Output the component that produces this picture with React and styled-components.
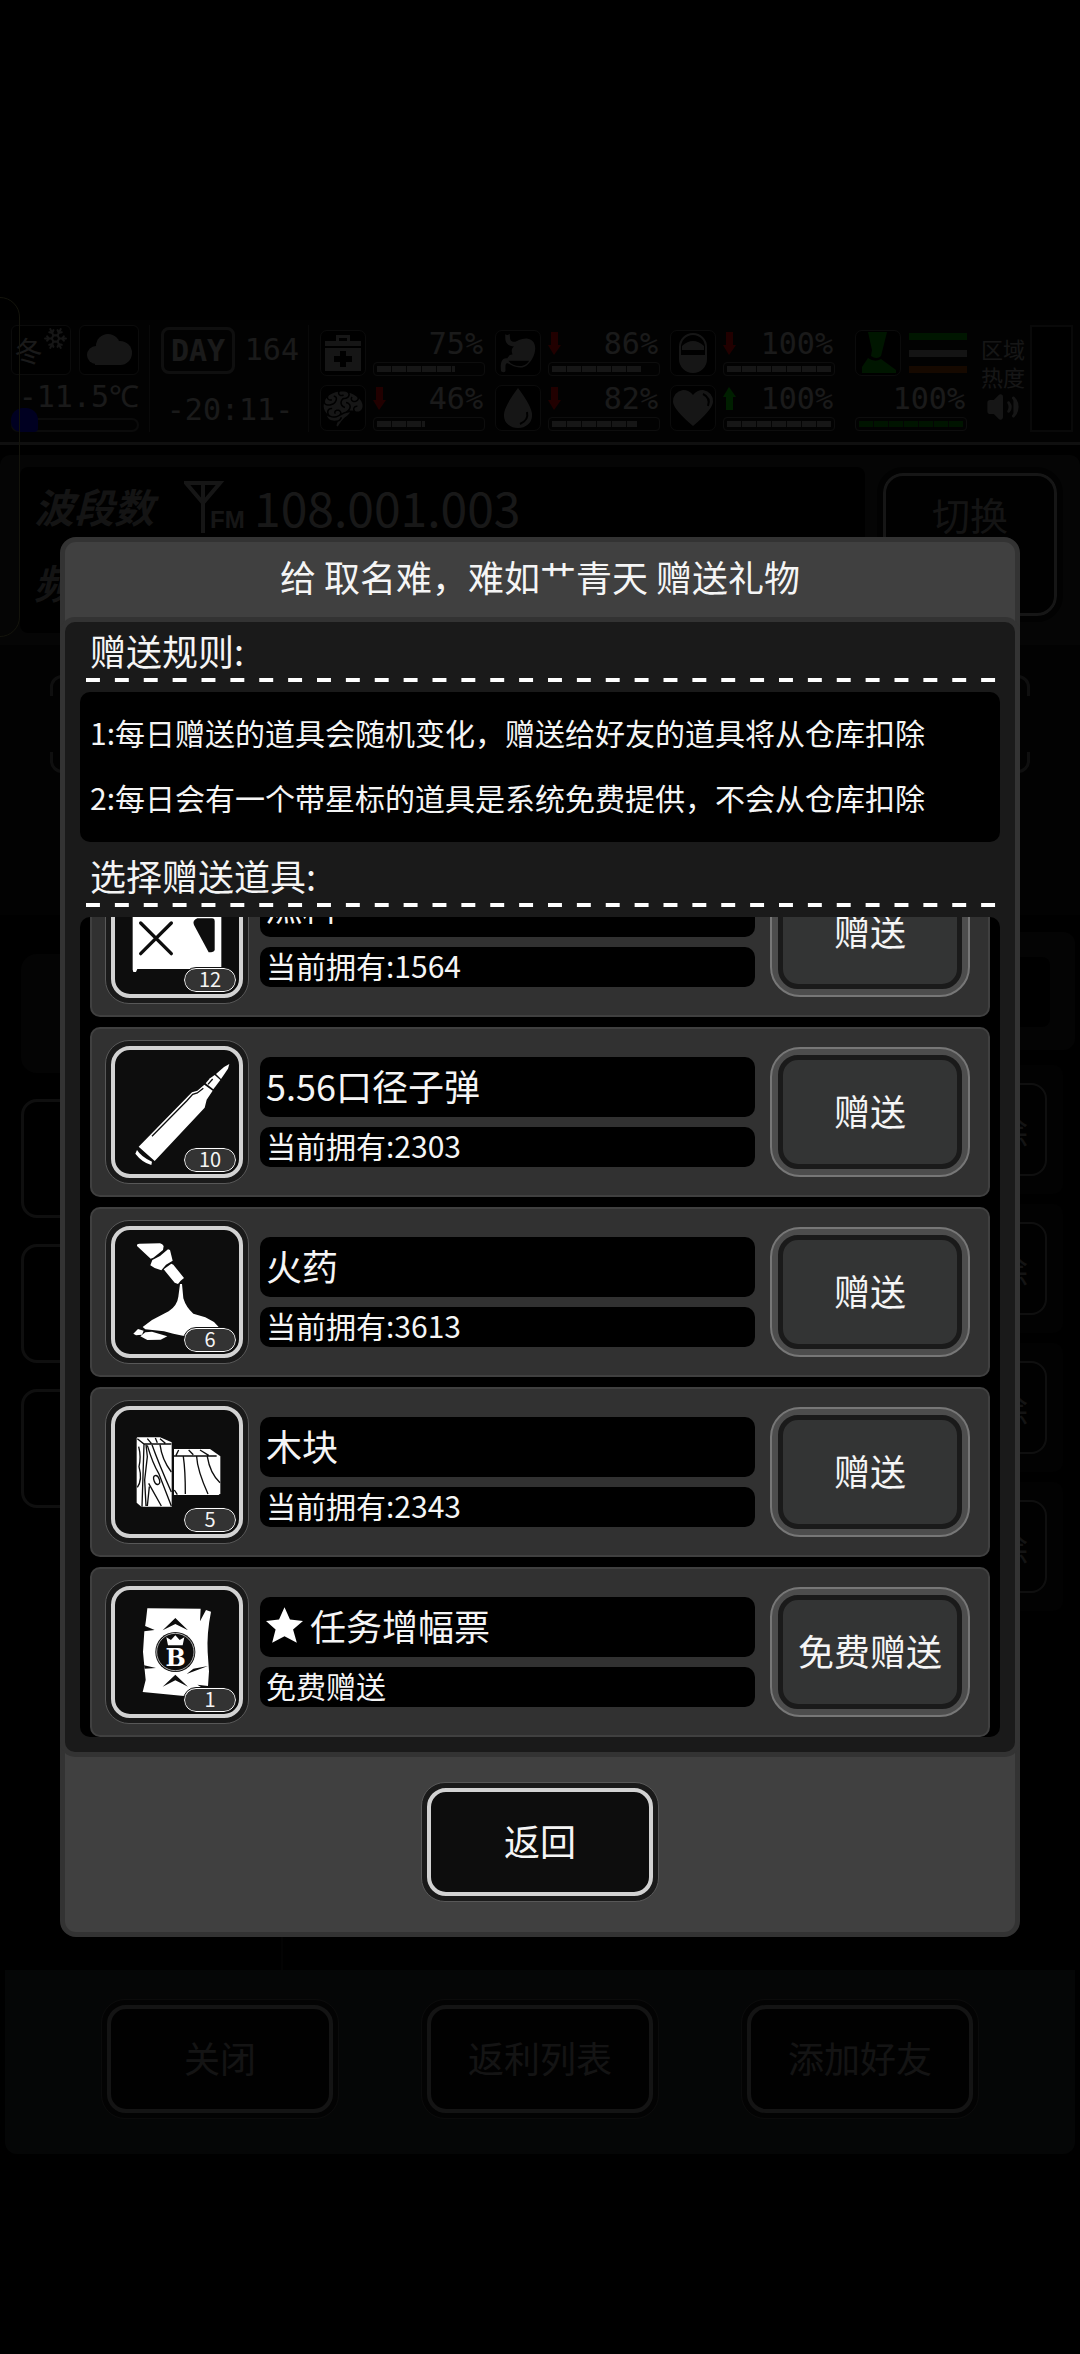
import styled, { createGlobalStyle, css } from "styled-components"
import { GiBrain, GiStomach } from "react-icons/gi"
import { Snowflake, Volume2 } from "lucide-react"

const GlobalStyle = createGlobalStyle`
    * {
        box-sizing: border-box;
    }
    body {
        margin: 0;
        background-color: #000;
        color: #f5f5f5;
        font-family: "Noto Sans CJK SC", sans-serif;
    }
    h1, h2, p, ul, ol {
        margin: 0;
        padding: 0;
        font-weight: 400;
        list-style: none;
    }
    button {
        font-family: inherit;
        color: inherit;
        cursor: pointer;
    }
`

/* double frame shared by the item tiles and the black buttons */
const darkFrame = css`
    padding: 5px;
    background-color: #1a1a1a;
    border: 1px solid #585858;
    border-radius: 24px;
`

const darkInner = css`
    display: flex;
    align-items: center;
    justify-content: center;
    width: 100%;
    height: 100%;
    background-color: #0d0d0d;
    border: 4px solid #d2d2d2;
    border-radius: 19px;
`

const Page = styled.div`
    min-height: 100vh;
    padding-top: 320px;
    overflow: hidden;
`

const Stage = styled.div`
    position: relative;
`

/* ---------- status bar ---------- */

const Hud = styled.header`
    display: flex;
    height: 125px;
    padding: 5px 7px 10px 11px;
    background-color: #141414;
    border-bottom: 3px solid #777;
    font-family: "DejaVu Sans Mono", monospace;
    font-size: 30px;
    line-height: 24px;
    color: #c4c4c4;
`

const HudGroup = styled.div`
    display: flex;
    flex-direction: column;
    flex-shrink: 0;
    justify-content: space-between;
    width: ${props => props.$width}px;
    margin-right: ${props => props.$gap || 0}px;
    padding: ${props => props.$padding || 0};
`

const HudLine = styled.div`
    display: flex;
    align-items: center;
    justify-content: ${props => props.$justify || "space-between"};
`

const Divider = styled.div`
    width: 1px;
    margin-right: 11px;
    background-color: #444;
`

const WeatherBox = styled.div`
    display: flex;
    align-items: center;
    justify-content: center;
    width: 60px;
    height: 50px;
    background-color: #000;
    border: 1px solid #555;
    border-radius: 6px;
    font-family: "Noto Sans CJK SC", sans-serif;
    font-size: 28px;

    svg {
        align-self: ${props => (props.$season ? "flex-start" : "center")};
    }
`

const Thermometer = styled.div`
    position: relative;
    height: 14px;
    border: 2px solid #555;
    border-radius: 7px;

    &::before {
        content: "";
        position: absolute;
        left: -2px;
        bottom: -2px;
        width: 27px;
        height: 24px;
        background-color: #00f;
        border-radius: 12px 12px 4px 10px;
    }
`

const DayBox = styled.div`
    width: 74px;
    height: 47px;
    margin-top: 2px;
    border: 3px solid #777;
    border-radius: 8px;
    font-weight: bold;
    line-height: 42px;
    text-align: center;
`

const IconBox = styled.div`
    display: flex;
    align-items: center;
    justify-content: center;
    width: 46px;
    height: 46px;
    background-color: #000;
    border: 1px solid #555;
    border-radius: 7px;
    color: ${props => props.$color || "#aaa"};
`

const Gauge = styled.div`
    display: flex;
    gap: 7px;
`

const GaugeBody = styled.div`
    display: flex;
    flex-direction: column;
    justify-content: space-between;
    width: 112px;
    height: 46px;

    span {
        padding: 2px 2px 0 0;
    }
`

const Bar = styled.div`
    height: 14px;
    padding: 3px;
    border: 1px solid #666;
    border-radius: 4px;
`

const BarFill = styled.div`
    height: 100%;
    background: repeating-linear-gradient(90deg, ${props => props.$color || "#aaa"} 0 14px, #222 14px 15px);
`

const Stripe = styled.div`
    width: 58px;
    height: 7px;
    background-color: ${props => props.$color};
`

const StripeStack = styled.div`
    display: flex;
    flex-direction: column;
    justify-content: space-between;
    height: 40px;
`

const HeatLabel = styled.div`
    display: flex;
    flex-direction: column;
    align-items: center;
    width: 44px;
    margin-right: 5px;
    padding-top: 9px;
    font-family: "Noto Sans CJK SC", sans-serif;
    font-size: 22px;
    line-height: 28px;
    color: #aaa;
`

const HeatBox = styled.div`
    flex: 1;
    background-color: #000;
    border: 2px solid #444;
`

/* ---------- page behind the dialog ---------- */

const EdgeHandle = styled.div`
    position: absolute;
    top: -23px;
    left: -2px;
    width: 22px;
    height: 340px;
    border: 1px solid #14140c;
    border-radius: 0 20px 20px 0;
`

const Radio = styled.section`
    display: flex;
    gap: 18px;
    height: 190px;
    margin-top: 10px;
    padding: 12px 23px 12px 20px;
    background-color: #282c2a;
    border-radius: 10px 10px 0 0;
`

const Frequency = styled.div`
    display: flex;
    flex-direction: column;
    gap: 14px;
    flex: 1;
    padding: 8px 14px;
    background-color: #000;
    border-radius: 8px;
`

const FrequencyRow = styled.div`
    display: flex;
    align-items: center;
    gap: 30px;
    height: 62px;
    color: #b8b8b8;

    strong {
        font-size: 40px;
        font-style: italic;
        line-height: 48px;
        color: #999;
    }
`

const FrequencyValue = styled.div`
    display: flex;
    align-items: center;
    gap: 8px;
    font-size: 48px;
    line-height: 56px;
`

const SwitchButton = styled.button`
    align-self: flex-start;
    width: 174px;
    height: 143px;
    margin-top: 6px;
    padding: 0 0 62px;
    background-color: #080808;
    border: 3px solid #aaa;
    border-radius: 20px;
    outline: 6px solid #111;
    font-size: 38px;
    line-height: 40px;
    color: #999;
`

const Signal = styled.section`
    height: 270px;
    padding: 30px 50px 0;
    background-color: #111;
`

/* only the corners of the frame show */
const SignalFrame = styled.div`
    position: relative;
    height: 98px;
    border: 3px solid #777;
    border-radius: 12px;

    &::after {
        content: "";
        position: absolute;
        inset: 18px -3px;
        background-color: #111;
    }
`

const Friends = styled.section`
    display: grid;
    grid-template-columns: 278px 1fr;
    height: 1055px;
    margin: 0 5px;
    background-color: #060606;
`

const Tabs = styled.div`
    display: flex;
    flex-direction: column;
    gap: 26px;
    padding: 39px 16px;
    border-right: 2px solid #1c1c1c;
`

const Tab = styled.button`
    height: 119px;
    background-color: ${props => (props.$active ? "#222" : "#050505")};
    border: 3px solid ${props => (props.$active ? "#222" : "#777")};
    border-radius: 16px;
`

const FriendList = styled.div`
    padding: 17px 0;
`

const Search = styled.div`
    height: 118px;
    margin-bottom: 15px;
    padding: 25px;
    background-color: #222;
    border-radius: 12px;
`

const SearchField = styled.input`
    width: 100%;
    height: 70px;
    background-color: #000;
    border: 0;
    border-radius: 8px;
`

const Friend = styled.div`
    display: flex;
    justify-content: flex-end;
    height: 129px;
    margin: 0 12px 10px 0;
    padding: 18px 16px;
    background-color: #121212;
    border-radius: 10px;
`

const RemoveButton = styled.button`
    width: 110px;
    height: 93px;
    padding: 0;
    background-color: #080808;
    border: 2px solid #777;
    border-radius: 16px;
    font-size: 36px;
    color: #999;
`

const BottomBar = styled.nav`
    display: grid;
    grid-template-columns: repeat(3, 1fr);
    justify-items: center;
    height: 184px;
    margin: 0 5px;
    padding: 29px 55px;
    background-color: #2c302e;
    border-radius: 0 0 12px 12px;
`

const FrameButton = styled.button`
    ${darkFrame}
    width: 238px;
    height: 120px;
    font-size: 36px;

    span {
        ${darkInner}
        padding-bottom: 4px;
    }
`

const BackdropButton = styled(FrameButton)`
    color: #999;

    span {
        border-color: #999;
    }
`

/* ---------- dialog ---------- */

const Overlay = styled.div`
    position: absolute;
    inset: 0;
    display: flex;
    align-items: center;
    padding: 0 60px;
    background-color: rgba(0, 0, 0, 0.87);
`

const Dialog = styled.section`
    width: 100%;
    background-color: #404040;
    border: 5px solid #333;
    border-radius: 16px;
`

const DialogTitle = styled.h1`
    height: 80px;
    font-size: 36px;
    line-height: 68px;
    text-align: center;
`

const DialogBody = styled.div`
    padding-bottom: 15px;
    background-color: #1a1a1a;
    border-radius: 10px;
    box-shadow: 0 0 0 5px #333;
`

const Heading = styled.h2`
    padding-left: 25px;
    font-size: 36px;
    line-height: 56px;
`

const DashedLine = styled.div`
    height: 4px;
    margin: 0 5px 10px 21px;
    background-image: linear-gradient(90deg, #fff 50%, transparent 50%);
    background-size: 29px 4px;
    background-repeat: round;
`

const Rules = styled.ol`
    margin: 0 15px 5px;
    padding: 8px 10px 12px;
    background-color: #000;
    border-radius: 10px;
    font-size: 30px;
    line-height: 65px;
`

/* the list is scrolled to its end, so the first row is cut by the top edge */
const GiftList = styled.ul`
    display: flex;
    flex-direction: column;
    justify-content: flex-end;
    gap: 10px;
    height: 820px;
    margin: 0 15px;
    padding: 0 10px;
    overflow: hidden;
    background-color: #000;
    border-radius: 10px;
`

const GiftRow = styled.li`
    display: flex;
    flex-shrink: 0;
    align-items: center;
    height: 170px;
    padding: 0 18px 0 13px;
    background-color: #313131;
    border: 2px solid #404040;
    border-radius: 10px;
`

const Tile = styled.div`
    ${darkFrame}
    position: relative;
    width: 144px;
    height: 144px;
`

const TileInner = styled.div`
    ${darkInner}
`

const Count = styled.span`
    position: absolute;
    right: 12px;
    bottom: 11px;
    width: 52px;
    height: 24px;
    background-color: #333;
    border: 1px solid #fff;
    border-radius: 12px;
    outline: 1px solid #111;
    font-size: 20px;
    line-height: 20px;
    text-align: center;
`

const GiftText = styled.div`
    display: flex;
    flex-direction: column;
    flex: 1;
    gap: 10px;
    margin: 0 15px 0 11px;
`

const GiftName = styled.p`
    display: flex;
    align-items: center;
    gap: 7px;
    height: 60px;
    padding: 0 0 4px 6px;
    background-color: #000;
    border-radius: 10px;
    font-size: 36px;
    line-height: 56px;
`

const GiftOwned = styled.p`
    height: 40px;
    padding-left: 6px;
    background-color: #000;
    border-radius: 10px;
    font-size: 30px;
    line-height: 36px;
`

const GiveButton = styled.button`
    width: 200px;
    height: 130px;
    padding: 6px;
    background-color: #4d4d4d;
    border: 2px solid #777;
    border-radius: 30px;
    font-size: 36px;

    span {
        display: flex;
        align-items: center;
        justify-content: center;
        height: 100%;
        padding-bottom: 4px;
        background-color: #333434;
        border: 5px solid #1a1a1a;
        border-radius: 20px;
    }
`

const DialogFooter = styled.footer`
    display: flex;
    justify-content: center;
    padding: 30px 0;
`

/* ---------- item drawings ---------- */

function FuelIcon(){
    return (
        <svg width="124" height="124" viewBox="165 -61 372 372">
            <path fill="#fff" d="M218 -20H440L484 30V231L400 236H232L228 245H220L218 238Z" />
            <path d="M242 98L334 190M334 98L242 190" stroke="#0d0d0d" strokeWidth="10" strokeLinecap="round" />
            <path fill="#0d0d0d" d="M412 84H456Q464 84 464 92V178Q463 186 446 186L402 104Q396 90 412 84Z" />
        </svg>
    )
}

function BulletIcon(){
    return (
        <svg width="124" height="124" viewBox="165 479 372 372" fill="#fff">
            <path d="M508 521L504 535L483 566L468 551L492 530Z" />
            <path d="M464 554L481 569L460 597L437 579L450 564Z" />
            <path d="M433 583L458 601L440 628L434 652L284 812L236 769L384 618L396 606L412 601Z" />
            <path d="M231 779Q244 800 276 814L274 824Q246 816 226 790Z" />
            <path d="M430 594L412 608L398 612L380 632L276 738" fill="none" stroke="#0d0d0d" strokeWidth="4" />
            <path d="M458 566L444 582" stroke="#0d0d0d" strokeWidth="4" />
        </svg>
    )
}

function PowderIcon(){
    return (
        <svg width="124" height="124" viewBox="165 120 372 372" fill="#fff">
            <path d="M231 168Q230 161 238 161L300 160Q308 162 311 168L309 180L280 203L272 206Z" />
            <path d="M324 178L330 180L338 212L318 224L304 241L284 234L271 226L277 210L300 198Z" />
            <path d="M334 221L340 224L372 264L362 272L354 282L344 278L311 238Z" />
            <path d="M360 282H366L370 325Q378 352 400 371L436 382L462 396L476 411L372 438L340 431L312 424L256 418L248 411L276 390L326 364Q352 346 355 320Z" />
            <path d="M220 431L234 417L251 422L246 434L228 436Z" />
            <path d="M241 439L256 427L276 425L322 439L302 449L262 450Z" />
        </svg>
    )
}

function WoodIcon(){
    return (
        <svg width="124" height="124" viewBox="165 120 372 372" fill="none" stroke="#0d0d0d" strokeWidth="4">
            <path fill="#fff" stroke="none" d="M232 202L300 202L335 217V410H244L230 398V204Z" />
            <path fill="#fff" stroke="none" d="M342 237H450L481 259V370L476 375H342Z" />
            <path d="M232 206L252 222H334M252 222L246 410M236 230Q244 260 237 290Q248 330 232 352M262 206L274 220M286 204L292 218M300 206L316 220" />
            <path d="M258 224L262 260L254 330L258 408M262 226Q278 280 296 310L334 408M276 224Q296 280 334 366M300 224Q306 270 334 306M266 340L304 408M268 350L262 408" />
            <ellipse cx="290" cy="330" rx="8" ry="14" transform="rotate(-20 290 330)" />
            <path d="M342 258H470M348 256L356 240M386 240L400 254M420 240L446 256M370 260Q376 300 376 372M410 260Q412 300 444 372M442 260Q450 310 480 338M343 360L352 374" />
        </svg>
    )
}

function TicketIcon(){
    return (
        <svg width="124" height="124" viewBox="165 660 372 372" fill="#0d0d0d">
            <path fill="#fff" d="M262 715L422 716L420 754L438 720L453 725Q440 790 443 846L447 904L444 948L412 944L424 952L372 978L248 966L257 930L254 900L249 846L253 784L258 750Z" />
            <path d="M250 766L284 780L252 784ZM252 886L288 894L254 896ZM444 888L380 912L400 896Z" />
            <path d="M308 781L346 744L384 781L346 762ZM308 950L346 914L384 950L346 931Z" />
            <circle cx="346" cy="846" r="60" />
            <circle cx="346" cy="846" r="56" fill="none" stroke="#fff" strokeWidth="2" />
            <path fill="#fff" d="M324 826L319 802L333 810L346 796L359 810L373 802L368 826Z" />
            <text x="347" y="889" fill="#fff" fontSize="72" fontWeight="bold" textAnchor="middle" fontFamily="DejaVu Serif, serif">B</text>
        </svg>
    )
}

function StarIcon(){
    return (
        <svg width="37" height="36" viewBox="0 0 108 104" fill="#fff">
            <path d="M54 0L70 36L108 40L79 65L90 104L54 85L18 104L28 65L0 40L38 36Z" />
        </svg>
    )
}

/* ---------- status bar drawings ---------- */

const CloudIcon = () => (
    <svg width="46" height="32" viewBox="0 0 46 32" fill="#aaa">
        <circle cx="22" cy="12" r="12" />
        <circle cx="10" cy="21" r="9" />
        <circle cx="34" cy="19" r="12" />
        <rect x="9" y="18" width="26" height="13" />
    </svg>
)

const MedkitIcon = () => (
    <svg width="38" height="38" viewBox="0 0 38 38" fill="currentColor">
        <path fillRule="evenodd" d="M12 7V1H26V7H37V12H1V7ZM15 7H23V4H15Z" />
        <path fillRule="evenodd" d="M1 14H37V37H1ZM16 17V22H10V28H16V33H22V28H28V22H22V17Z" />
    </svg>
)

const DropIcon = () => (
    <svg width="30" height="40" viewBox="0 0 30 40" fill="currentColor">
        <path d="M15 0Q30 20 29 28A14 12 0 0 1 1 28Q0 20 15 0Z" />
        <path d="M24 24Q26 32 17 36" fill="none" stroke="#000" strokeWidth="2" />
    </svg>
)

const PillIcon = () => (
    <svg width="30" height="42" viewBox="0 0 30 42">
        <rect x="2" y="2" width="26" height="38" rx="13" fill="none" stroke="currentColor" strokeWidth="2" />
        <path d="M2 23H28V28A13 12 0 0 1 2 28ZM4 14Q15 4 26 14V18H4Z" fill="currentColor" />
    </svg>
)

const HeartIcon = () => (
    <svg width="40" height="36" viewBox="0 0 40 36" fill="currentColor">
        <path d="M20 5Q24 0 30 0Q40 2 40 12Q39 20 20 36Q1 20 0 12Q0 2 10 0Q16 0 20 5Z" />
        <path d="M30 4Q38 8 35 16" fill="none" stroke="#000" strokeWidth="2" />
    </svg>
)

const LegIcon = () => (
    <svg width="38" height="42" viewBox="0 0 38 42" fill="currentColor">
        <path d="M9 0H28L22 24Q18 28 12 24L13 18Z" />
        <path d="M9 26Q16 31 22 27L37 38V41H3V35Z" />
    </svg>
)

const AntennaIcon = () => (
    <svg width="62" height="54" viewBox="0 0 62 54" stroke="#aaa" strokeWidth="4" fill="none">
        <path d="M2 4H36L19 24ZM19 4V54" />
        <text x="26" y="49" fill="#aaa" stroke="none" fontSize="24" fontWeight="bold" fontFamily="Liberation Sans, sans-serif">FM</text>
    </svg>
)

const ArrowIcon = ({up}) => (
    <svg width="13" height="23" viewBox="0 0 13 23" fill={up ? "#0e0" : "#f00"}>
        <path d={up ? "M6 0L13 10H10V23H3V10H0Z" : "M6 23L13 13H10V0H3V13H0Z"} />
    </svg>
)

const gauges = [
    [
        { icon: <MedkitIcon />, value: 75 },
        { icon: <GiBrain size={42} />, value: 46, trend: "down" },
    ],
    [
        { icon: <GiStomach size={42} />, value: 86, trend: "down" },
        { icon: <DropIcon />, value: 82, trend: "down" },
    ],
    [
        { icon: <PillIcon />, value: 100, trend: "down" },
        { icon: <HeartIcon />, value: 100, trend: "up" },
    ],
]

const gifts = [
    { name: "燃料", icon: <FuelIcon />, count: 12, owned: 1564 },
    { name: "5.56口径子弹", icon: <BulletIcon />, count: 10, owned: 2303 },
    { name: "火药", icon: <PowderIcon />, count: 6, owned: 3613 },
    { name: "木块", icon: <WoodIcon />, count: 5, owned: 2343 },
    { name: "任务增幅票", icon: <TicketIcon />, count: 1, free: true },
]

function StatusGauge({icon, value, trend}){
    return (
        <Gauge>
            <IconBox>{icon}</IconBox>
            <GaugeBody>
                <HudLine>
                    {trend ? <ArrowIcon up={trend === "up"} /> : <i />}
                    <span>{value}%</span>
                </HudLine>
                <Bar><BarFill style={{ width: value + "%" }} /></Bar>
            </GaugeBody>
        </Gauge>
    )
}

function StatusBar(){
    return (
        <Hud>
            <HudGroup $width={128} $gap={10}>
                <HudLine>
                    <WeatherBox $season>冬<Snowflake size={25} color="#aaa" /></WeatherBox>
                    <WeatherBox><CloudIcon /></WeatherBox>
                </HudLine>
                <HudLine $justify="flex-end">-11.5℃</HudLine>
                <Thermometer />
            </HudGroup>
            <Divider />
            <HudGroup $width={138} $gap={9} $padding="0 0 10px">
                <HudLine>
                    <DayBox>DAY</DayBox>
                    <span>164</span>
                </HudLine>
                <HudLine $justify="center">-20:11-</HudLine>
            </HudGroup>
            <Divider />
            {gauges.map((column, index) => (
                <HudGroup key={index} $width={175} $padding="5px 0 1px">
                    {column.map(gauge => <StatusGauge key={gauge.value + gauge.trend} {...gauge} />)}
                </HudGroup>
            ))}
            <HudGroup $width={136} $padding="5px 14px 1px 10px">
                <HudLine>
                    <IconBox $color="#0a0"><LegIcon /></IconBox>
                    <StripeStack>
                        <Stripe $color="#0a0" />
                        <Stripe $color="#999" />
                        <Stripe $color="#a40" />
                    </StripeStack>
                </HudLine>
                <GaugeBody>
                    <HudLine $justify="flex-end"><span>100%</span></HudLine>
                    <Bar><BarFill $color="#090" style={{ width: "100%" }} /></Bar>
                </GaugeBody>
            </HudGroup>
            <HeatLabel>
                <span>区域</span>
                <span>热度</span>
                <Volume2 size={34} fill="#aaa" />
            </HeatLabel>
            <HeatBox />
        </Hud>
    )
}

function Backdrop(){
    return (
        <>
            <StatusBar />
            <Radio>
                <Frequency>
                    <FrequencyRow>
                        <strong>波段数</strong>
                        <FrequencyValue><AntennaIcon />108.001.003</FrequencyValue>
                    </FrequencyRow>
                    <FrequencyRow><strong>频</strong></FrequencyRow>
                </Frequency>
                <SwitchButton>切换</SwitchButton>
            </Radio>
            <Signal><SignalFrame /></Signal>
            <Friends>
                <Tabs>
                    <Tab $active />
                    <Tab />
                    <Tab />
                    <Tab />
                </Tabs>
                <FriendList>
                    <Search><SearchField aria-label="搜索" /></Search>
                    {[1, 2, 3, 4].map(id => (
                        <Friend key={id}><RemoveButton>删除</RemoveButton></Friend>
                    ))}
                </FriendList>
            </Friends>
            <BottomBar>
                <BackdropButton><span>关闭</span></BackdropButton>
                <BackdropButton><span>返利列表</span></BackdropButton>
                <BackdropButton><span>添加好友</span></BackdropButton>
            </BottomBar>
        </>
    )
}

function Gift({name, icon, count, owned, free}){
    return (
        <GiftRow>
            <Tile>
                <TileInner>{icon}</TileInner>
                <Count>{count}</Count>
            </Tile>
            <GiftText>
                <GiftName>{free && <StarIcon />}{name}</GiftName>
                <GiftOwned>{free ? "免费赠送" : "当前拥有:" + owned}</GiftOwned>
            </GiftText>
            <GiveButton><span>{free ? "免费赠送" : "赠送"}</span></GiveButton>
        </GiftRow>
    )
}

function GiftDialog(){
    return (
        <Dialog role="dialog" aria-labelledby="gift-title">
            <DialogTitle id="gift-title">给 取名难，难如艹青天 赠送礼物</DialogTitle>
            <DialogBody>
                <Heading>赠送规则:</Heading>
                <DashedLine />
                <Rules>
                    <li>1:每日赠送的道具会随机变化，赠送给好友的道具将从仓库扣除</li>
                    <li>2:每日会有一个带星标的道具是系统免费提供，不会从仓库扣除</li>
                </Rules>
                <Heading>选择赠送道具:</Heading>
                <DashedLine />
                <GiftList>
                    {gifts.map(gift => <Gift key={gift.name} {...gift} />)}
                </GiftList>
            </DialogBody>
            <DialogFooter>
                <FrameButton><span>返回</span></FrameButton>
            </DialogFooter>
        </Dialog>
    )
}

function App(){
    return (
        <Page>
            <GlobalStyle />
            <Stage>
                <Backdrop />
                <Overlay>
                    <GiftDialog />
                </Overlay>
                <EdgeHandle />
            </Stage>
        </Page>
    )
}

export default App
